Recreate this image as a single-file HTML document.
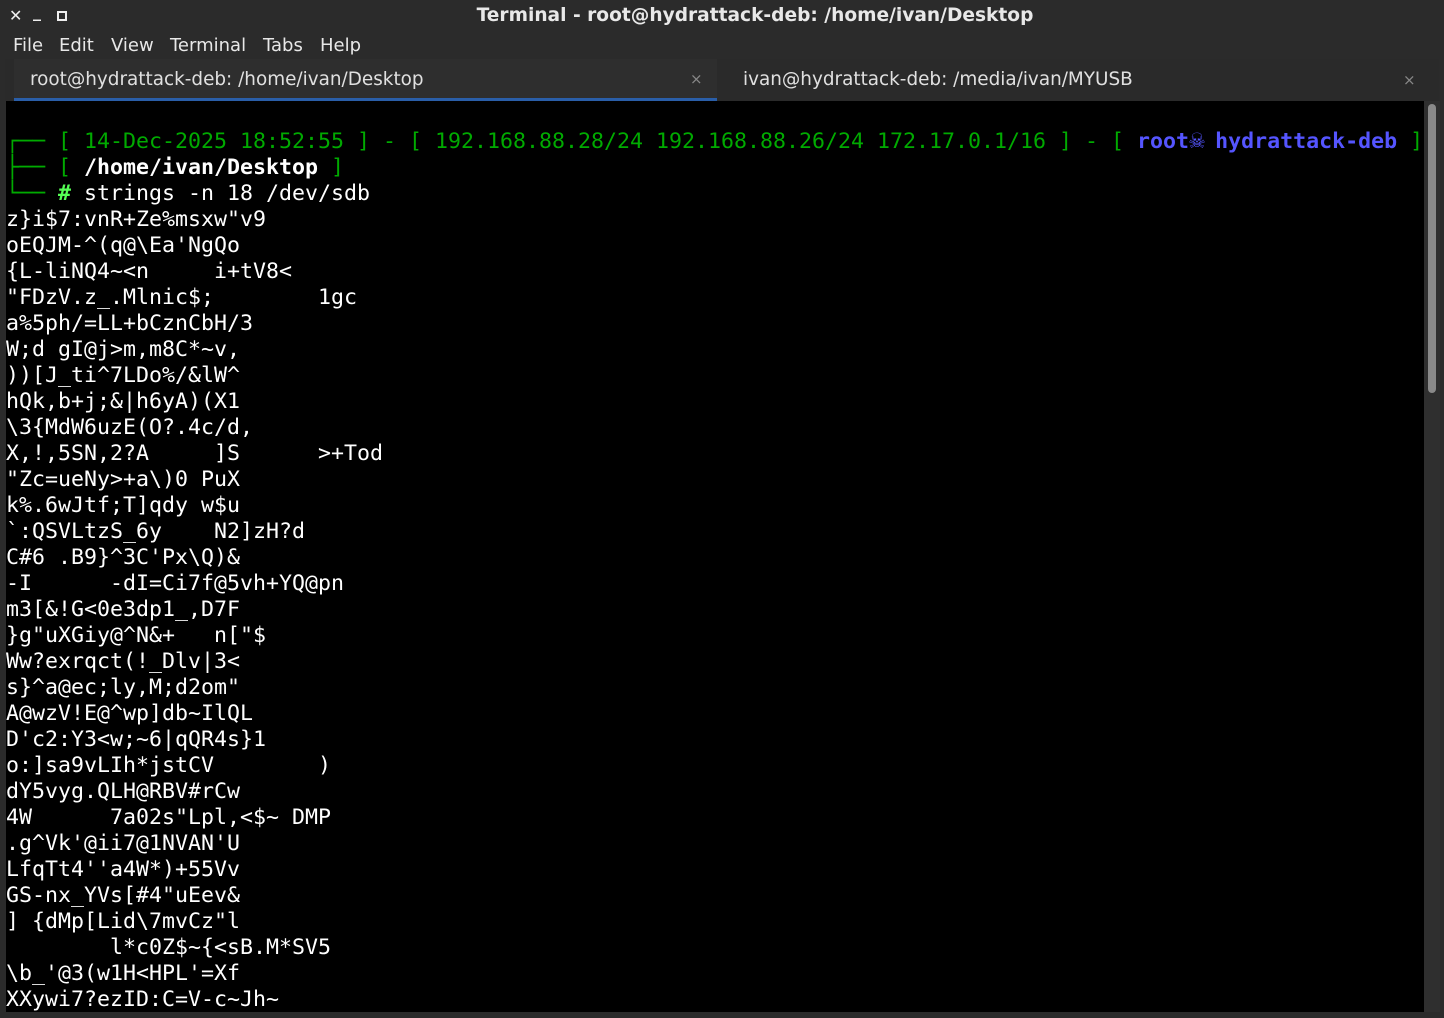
<!DOCTYPE html>
<html><head><meta charset="utf-8"><style>
html,body{margin:0;padding:0;background:#2b2b2b;width:1444px;height:1018px;overflow:hidden;font-family:"DejaVu Sans","Liberation Sans",sans-serif;}
.title{position:absolute;left:0;top:1px;width:1510px;height:30px;color:#e8e8e8;font-weight:bold;font-size:18.6px;text-align:center;line-height:30px;}
.ctl{position:absolute;top:0;color:#eee;font-size:16px;font-weight:bold;line-height:30px;}
.menu{position:absolute;left:0;top:31px;height:29px;width:1444px;color:#e8e8e8;font-size:18px;line-height:29px;}
.menu span{position:absolute;}
.tabs{position:absolute;left:5px;top:59px;width:1434px;height:42px;background:#2a2a2a;}
.tab{position:absolute;top:0;height:42px;color:#e0e0e0;font-size:18.4px;line-height:42px;}
.term{position:absolute;left:6px;top:101px;width:1418px;height:911px;background:#000;}
pre{margin:0;position:absolute;left:6px;top:103px;font-family:"DejaVu Sans Mono","Liberation Mono",monospace;font-size:21.6px;line-height:26px;color:#fff;tab-size:8;-moz-tab-size:8;}
.g{color:#00aa00}.G{color:#55ff55;font-weight:bold}.b{color:#5555ff;font-weight:bold}.w{font-weight:bold}
.sk{display:inline-block;width:26px;text-align:left;font-size:26px;line-height:20px;}
.sb{position:absolute;left:1424px;top:101px;width:16px;height:911px;background:#2f2f2f;}
.th{position:absolute;left:1428px;top:104px;width:8px;height:289px;background:#8a8a8a;border-radius:4px;}
</style></head><body>
<div class="title">Terminal - root@hydrattack-deb: /home/ivan/Desktop</div>
<div class="ctl" style="left:9px;top:1px">✕</div>
<div class="ctl" style="left:33px;top:-3px">_</div>
<div style="position:absolute;left:57px;top:11px;width:6px;height:6px;border:2px solid #eee"></div>
<div class="menu"><span style="left:13px">File</span><span style="left:59px">Edit</span><span style="left:111px">View</span><span style="left:170px">Terminal</span><span style="left:263px">Tabs</span><span style="left:320px">Help</span></div>
<div class="tabs">
<div class="tab" style="left:9px;width:703px;background:#2e2e2e;border-bottom:3px solid #2a5ea8;height:39px;line-height:41px"><span style="position:absolute;left:16px">root@hydrattack-deb: /home/ivan/Desktop</span><span style="position:absolute;left:676px;color:#888;font-size:15px">×</span></div>
<div class="tab" style="left:712px;width:722px"><span style="position:absolute;left:26px">ivan@hydrattack-deb: /media/ivan/MYUSB</span><span style="position:absolute;left:686px;color:#888;font-size:15px">×</span></div>
</div>
<div class="term"></div>
<pre>&#8203;
<span class="g">┌── [ 14-Dec-2025 18:52:55 ] - [ 192.168.88.28/24 192.168.88.26/24 172.17.0.1/16 ] - [ </span><span class="b">root<span class="sk">☠</span>hydrattack-deb</span><span class="g"> ]</span>
<span class="g">├── [ </span><span class="w">/home/ivan/Desktop</span><span class="g"> ]</span>
<span class="g">└── </span><span class="G">#</span> strings -n 18 /dev/sdb
z}i$7:vnR+Ze%msxw"v9
oEQJM-^(q@\Ea'NgQo
{L-liNQ4~&lt;n	i+tV8&lt;
"FDzV.z_.Mlnic$;	1gc
a%5ph/=LL+bCznCbH/3
W;d gI@j&gt;m,m8C*~v,
))[J_ti^7LDo%/&amp;lW^
hQk,b+j;&amp;|h6yA)(X1
\3{MdW6uzE(O?.4c/d,
X,!,5SN,2?A	]S	&gt;+Tod
"Zc=ueNy&gt;+a\)0 PuX
k%.6wJtf;T]qdy w$u
`:QSVLtzS_6y	N2]zH?d
C#6 .B9}^3C'Px\Q)&amp;
-I	-dI=Ci7f@5vh+YQ@pn
m3[&amp;!G&lt;0e3dp1_,D7F
}g"uXGiy@^N&amp;+	n["$
Ww?exrqct(!_Dlv|3&lt;
s}^a@ec;ly,M;d2om"
A@wzV!E@^wp]db~IlQL
D'c2:Y3&lt;w;~6|qQR4s}1
o:]sa9vLIh*jstCV	)
dY5vyg.QLH@RBV#rCw
4W	7a02s"Lpl,&lt;$~ DMP
.g^Vk'@ii7@1NVAN'U
LfqTt4''a4W*)+55Vv
GS-nx_YVs[#4"uEev&amp;
] {dMp[Lid\7mvCz"l
	l*c0Z$~{&lt;sB.M*SV5
\b_'@3(w1H&lt;HPL'=Xf
XXywi7?ezID:C=V-c~Jh~</pre>
<div class="sb"></div><div class="th"></div>
</body></html>
